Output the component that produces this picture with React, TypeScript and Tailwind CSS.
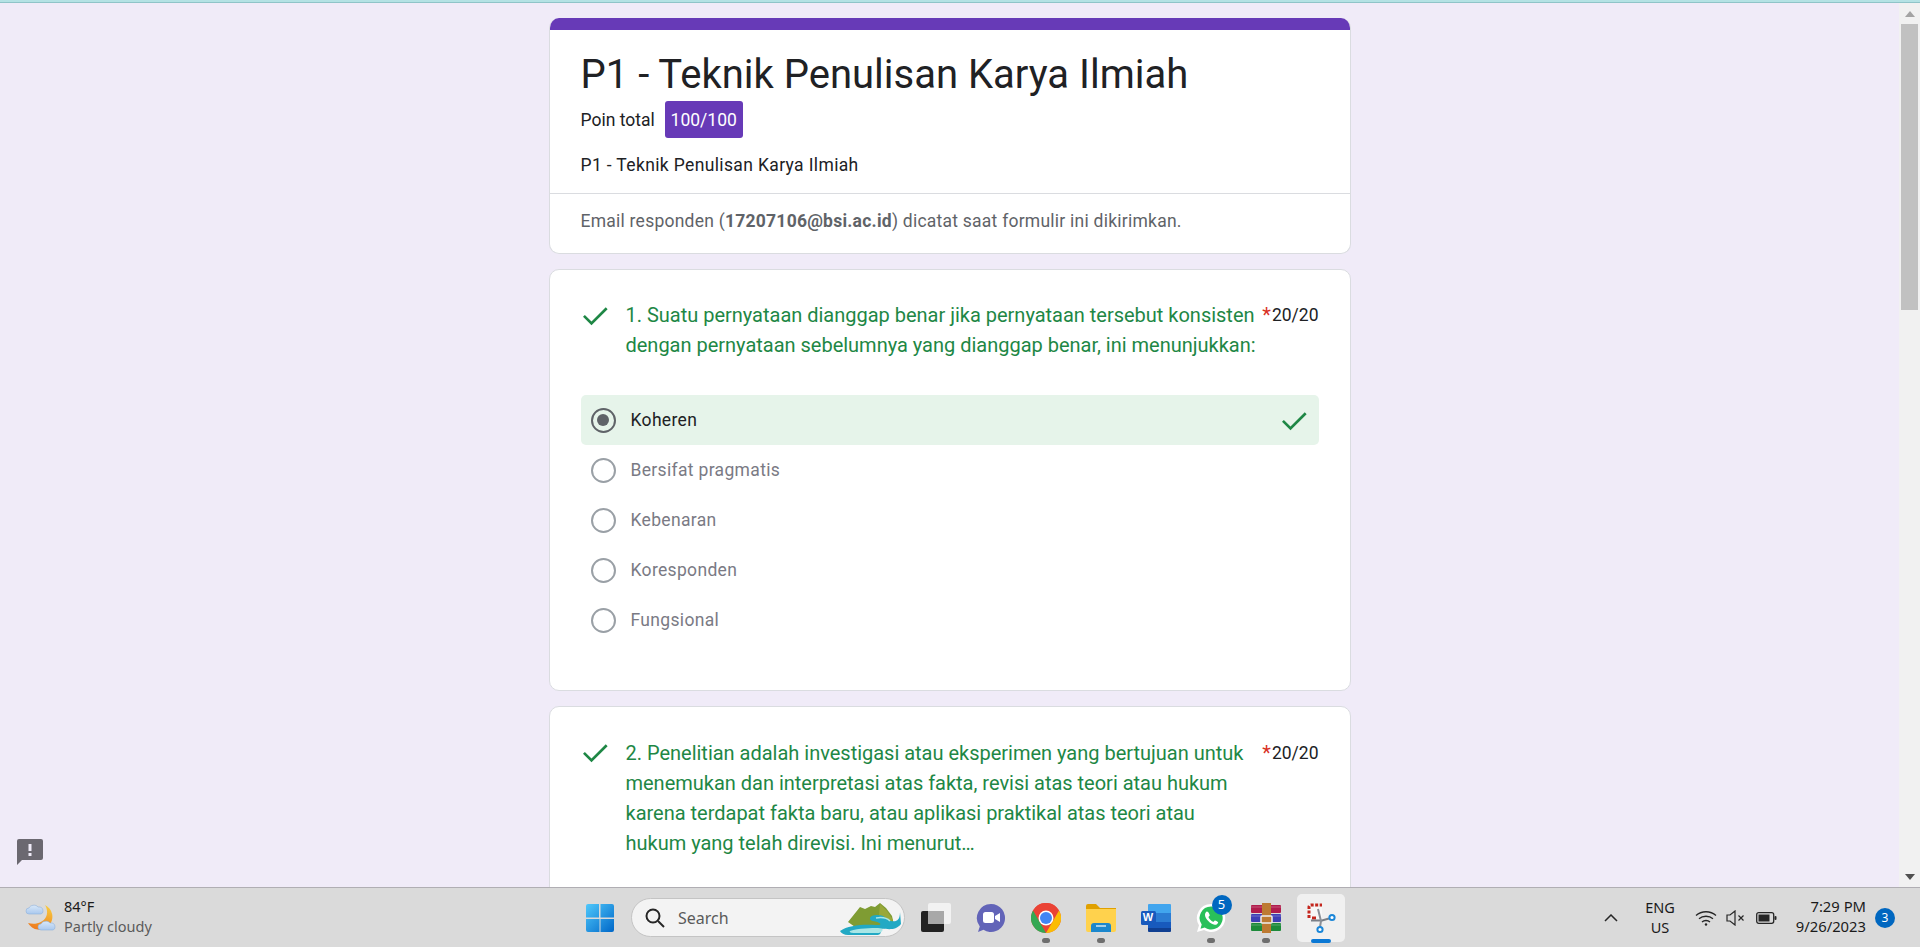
import React from "react";

const Check = ({ className }: { className?: string }) => (
  <svg viewBox="0 0 24 24" className={className} fill="#1e8745">
    <path d="M9.2 17.2 3.9 11.9l-1.5 1.5 6.8 6.8L22.1 7.3l-1.5-1.5z" />
  </svg>
);

function Radio({ on }: { on?: boolean }) {
  return (
    <span className={"flex h-[25px] w-[25px] shrink-0 items-center justify-center rounded-full border-[2.5px] " + (on ? "border-[#5f6368]" : "border-[#9aa0a6]")}>
      {on && <span className="h-[12.5px] w-[12.5px] rounded-full bg-[#5f6368]" />}
    </span>
  );
}

function Option({ label, on }: { label: string; on?: boolean }) {
  return (
    <div className={"flex h-[50px] items-center rounded-[5px] pl-[10px] pr-[10px] " + (on ? "bg-[#e6f4ea]" : "")}>
      <Radio on={on} />
      <span className={"ml-[15px] text-[17.5px] tracking-[0.33px] " + (on ? "text-[#202124]" : "text-[#7a7a84]")}>{label}</span>
      {on && <Check className="ml-auto h-[30px] w-[30px]" />}
    </div>
  );
}

function QuestionHead({ lines }: { lines: string[] }) {
  return (
    <div className="flex items-start">
      <Check className="mt-[-0.5px] ml-[-1px] h-[30px] w-[30px] shrink-0" />
      <div className="ml-[16px] w-[620px] text-[20px] leading-[30px] tracking-[-0.01px] text-[#1e8745]">
        {lines.map((l) => (
          <div key={l} className="whitespace-nowrap">{l}</div>
        ))}
      </div>
      <div className="ml-auto flex text-[17.5px] leading-[30px] text-[#202124]">
        <span className="pr-[1px] text-[20px] text-[#d93025]">*</span>20/20
      </div>
    </div>
  );
}

const WinLogo = () => (
  <svg viewBox="0 0 30 30" className="h-[30px] w-[30px]">
    <defs>
      <linearGradient id="w" x1="0" y1="0" x2="1" y2="1">
        <stop offset="0" stopColor="#4fc8fb" />
        <stop offset="1" stopColor="#0067c8" />
      </linearGradient>
    </defs>
    <path d="M1 3a2 2 0 0 1 2-2h11v13.5H1zM15.5 1H27a2 2 0 0 1 2 2v11.500H15.500zM1 16h13.500v13H3a2 2 0 0 1-2-2zM15.500 16H29v11a2 2 0 0 1-2 2H15.500z" fill="url(#w)" />
  </svg>
);

const Landscape = () => (
  <svg viewBox="0 0 62 36" className="absolute right-[2px] bottom-0 h-[36px] w-[62px]">
    <path d="M8 22 20 7l5 2 6-3 4 1 5-4 6 5 6 8 2 9-16 3-20 1z" fill="#7f9c33" />
    <path d="M40 4l7 7 6 9-3 4-8-1-3-8z" fill="#99a83a" />
    <path d="M0 31c8-6 24-7 36-6 8 .5 4-3-3-4-5-1-4-6 4-6 10 0 8 5 14 6 5 1 9 0 9-9l1 12c-6 8-16 4-20 5-3 1 3 4-3 6H8C4 35 1 33 0 31z" fill="#22a9c4" />
    <path d="M10 31c8-3 22-3 28-3 6 0 6 3 1 5H14c-3 0-5-1-4-2z" fill="#a9e6e6" />
    <path d="M36 18c6-1 11 0 14 3" stroke="#a9e6e6" strokeWidth="1.500" fill="none" />
  </svg>
);

const TaskView = () => (
  <svg viewBox="0 0 30 30" className="h-[30px] w-[30px]">
    <rect x="0" y="8" width="23" height="21" rx="2" fill="#222" />
    <rect x="7" y="0" width="23" height="21" rx="2" fill="#f4f4f4" fillOpacity="0.9" />
    <rect x="7" y="8" width="16" height="13" fill="#a8a8a8" />
  </svg>
);

const Meet = () => (
  <svg viewBox="0 0 30 30" className="h-[30px] w-[30px]">
    <path d="M15 1a14 14 0 1 1-7.500 25.800L2 29l1.800-5.500A14 14 0 0 1 15 1z" fill="#6264b8" />
    <rect x="7" y="9" width="11" height="11" rx="2.500" fill="#fff" />
    <path d="M19 13l5-3v9l-5-3z" fill="#fff" />
  </svg>
);

const Chrome = () => (
  <svg viewBox="0 0 30 30" className="h-[30px] w-[30px]">
    <circle cx="15" cy="15" r="15" fill="#ea4335" />
    <path d="M2 7.500 15 30A15 15 0 0 1 2 7.500z" fill="#34a853" />
    <path d="M15 30 28 7.500A15 15 0 0 1 15 30z" fill="#fbbc04" />
    <path d="M2 7.500A15 15 0 0 1 28 7.500H15A7.500 7.500 0 0 0 8.500 11.300z" fill="#ea4335" />
    <circle cx="15" cy="15" r="7.500" fill="#fff" />
    <circle cx="15" cy="15" r="6" fill="#4285f4" />
  </svg>
);

const Folder = () => (
  <svg viewBox="0 0 30 28" className="h-[28px] w-[30px]">
    <path d="M0 2a2 2 0 0 1 2-2h8l4 4h16v4H0z" fill="#e0a000" />
    <path d="M0 5h30v21a2 2 0 0 1-2 2H2a2 2 0 0 1-2-2z" fill="#ffd24d" />
    <path d="M5 27v-5a3 3 0 0 1 3-3h14a3 3 0 0 1 3 3v6H5z" fill="#1b87cd" />
    <rect x="10" y="21" width="10" height="2" fill="#fff" fillOpacity="0.6" />
  </svg>
);

const WordIcon = () => (
  <div className="relative h-[28px] w-[30px]">
    <svg viewBox="0 0 30 28" className="h-[28px] w-[30px]">
      <path d="M7 1a1 1 0 0 1 1-1h21a1 1 0 0 1 1 1v8H7z" fill="#41a5ee" />
      <rect x="7" y="9" width="23" height="9" fill="#2b7cd3" />
      <rect x="7" y="18" width="23" height="6" fill="#185abd" />
      <path d="M7 24h23v3a1 1 0 0 1-1 1H8a1 1 0 0 1-1-1z" fill="#103f91" />
      <rect x="0" y="7" width="15" height="14" rx="1.500" fill="#185abd" />
    </svg>
    <span className="absolute top-[7px] left-0 flex h-[14px] w-[15px] items-center justify-center font-['Liberation_Sans',sans-serif] text-[11px] font-bold text-white">W</span>
  </div>
);

const WhatsApp = () => (
  <svg viewBox="0 0 30 30" className="h-[30px] w-[30px]">
    <path d="M15 1a14 14 0 1 1-7 26L1 29l2-6.700A14 14 0 0 1 15 1z" fill="#fff" />
    <path d="M15 3.500a11.500 11.500 0 1 1-6.300 21L4.500 25.700l1.200-4.100A11.500 11.500 0 0 1 15 3.500z" fill="#29c05a" />
    <path d="M10.800 8.500c-1 .5-2 2-1.800 3.800.4 3.500 5.300 9 9.700 9.400 1.800.2 3.200-1 3.500-2.300.1-.5-2.800-2.200-3.300-2-.6.300-1 1.300-1.600 1.300-1.500 0-4.800-3.300-4.800-4.700 0-.6 1-1 1.200-1.600.2-.5-1.500-4.300-2.900-3.900z" fill="#fff" />
  </svg>
);

const WinRar = () => (
  <svg viewBox="0 0 30 30" className="h-[30px] w-[30px]">
    <rect x="0" y="2" width="30" height="8" rx="1" fill="#b01c4c" />
    <rect x="0" y="11" width="30" height="8" rx="1" fill="#3f3fb5" />
    <rect x="0" y="20" width="30" height="8" rx="1" fill="#1d8a3a" />
    <path d="M0 4h30M0 13h30M0 22h30" stroke="#fff" strokeOpacity="0.25" strokeWidth="1" />
    <rect x="11" y="0" width="9" height="30" fill="#bd7a32" />
    <rect x="10" y="13" width="11" height="7" rx="1" fill="#bd7a32" stroke="#eee" strokeWidth="1.500" />
  </svg>
);

const Snip = () => (
  <svg viewBox="0 0 30 32" className="h-[32px] w-[30px]">
    <path d="M3 5h13v12H3z" fill="#f7f7f7" />
    <path d="M3 16V5a2 2 0 0 1 2-2h11" stroke="#c4261d" strokeWidth="3" fill="none" strokeDasharray="3 1.500" />
    <path d="M6 16h4" stroke="#c4261d" strokeWidth="3" />
    <path d="M5 18.500h11l7-2" stroke="#7a7f87" strokeWidth="2" fill="none" />
    <path d="M12 7l3 12-1 6" stroke="#8a8f97" strokeWidth="2" fill="none" />
    <circle cx="26" cy="15.500" r="2.600" fill="#fff" stroke="#1a86d8" strokeWidth="2" />
    <circle cx="14" cy="27.500" r="2.600" fill="#fff" stroke="#1a86d8" strokeWidth="2" />
  </svg>
);

const Weather = () => (
  <svg viewBox="0 0 32 32" className="h-[32px] w-[32px]">
    <defs>
      <linearGradient id="moon" x1="0.7" y1="0" x2="0.3" y2="1">
        <stop offset="0" stopColor="#f8c93e" />
        <stop offset="1" stopColor="#ee7a1e" />
      </linearGradient>
      <linearGradient id="cloud" x1="0" y1="0" x2="0" y2="1">
        <stop offset="0" stopColor="#d9e8f8" />
        <stop offset="1" stopColor="#a9c8ee" />
      </linearGradient>
    </defs>
    <path d="M20 3A13 13 0 1 1 3 21C10 23 18 21 21 15 23 11 22 6 20 3z" fill="url(#moon)" />
    <path d="M4 12a3 3 0 0 1 0-6c1-3 7-4 9-1 3-.5 5 1 5 4a3 3 0 0 1-2 3z" fill="url(#cloud)" stroke="#8fb2de" strokeWidth="0.600" />
    <path d="M16 28a3 3 0 0 1 0-6c1-3 7-4 9-1 3-.5 5 1 5 4a3 3 0 0 1-2 3z" fill="url(#cloud)" stroke="#8fb2de" strokeWidth="0.600" />
  </svg>
);

function Cell({ children, dot, active }: { children: React.ReactNode; dot?: boolean; active?: boolean }) {
  return (
    <div className="relative flex h-[48px] w-[55px] items-center justify-center">
      {active && <div className="absolute inset-x-[3.500px] inset-y-0 rounded-[5px] bg-[#f0f0f0]" />}
      <div className="relative flex items-center justify-center">{children}</div>
      {dot && <div className="absolute bottom-[-1px] h-[5px] w-[8px] rounded-full bg-[#6e6e6e]" />}
      {active && <div className="absolute bottom-[-1px] h-[4px] w-[20px] rounded-full bg-[#0b78d4]" />}
    </div>
  );
}

export default function App() {
  return (
    <div className="flex h-[947px] w-[1920px] flex-col overflow-hidden bg-[#f0ebf8] font-['Roboto',sans-serif]">
      <div className="h-[3px] shrink-0 border-b border-[#8fc4c8] bg-[#b4e2e4]" />
      <div className="relative flex min-h-0 flex-1">
        <main className="min-w-0 flex-1 overflow-hidden pt-[15px]">
          <div className="mx-auto w-[802px]">
            <section className="overflow-hidden rounded-[10px] border-x border-b border-[#dadce0] bg-white">
              <div className="-mx-px h-[12px] bg-[#673ab7]" />
              <div className="px-[31px]">
                <h1 className="pt-[22px] text-[40px] leading-[46px] text-[#202124]">P1 - Teknik Penulisan Karya Ilmiah</h1>
                <div className="mt-[3px] flex items-center">
                  <span className="pt-[2px] text-[17.5px] text-[#202124]">Poin total</span>
                  <span className="ml-[10px] flex h-[37px] w-[78px] items-center justify-center rounded-[3px] bg-[#673ab7] pt-[2px] text-[17.5px] text-white">100/100</span>
                </div>
                <p className="mt-[14px] text-[17.5px] leading-[26px] tracking-[0.36px] text-[#202124]">P1 - Teknik Penulisan Karya Ilmiah</p>
              </div>
              <div className="mt-[15px] flex h-[60px] items-start border-t border-[#dadce0] px-[31px] pt-[14px] text-[17.5px] leading-[26px] tracking-[0.24px] text-[#5f6368]">
                <span>Email responden (<b className="font-bold">17207106@bsi.ac.id</b>) dicatat saat formulir ini dikirimkan.</span>
              </div>
            </section>

            <section className="mt-[15px] h-[422px] rounded-[10px] border border-[#dadce0] bg-white pt-[30px] pr-[31px] pl-[31px]">
              <QuestionHead lines={[
                "1. Suatu pernyataan dianggap benar jika pernyataan tersebut konsisten",
                "dengan pernyataan sebelumnya yang dianggap benar, ini menunjukkan:",
              ]} />
              <div className="mt-[35px]">
                <Option label="Koheren" on />
                <Option label="Bersifat pragmatis" />
                <Option label="Kebenaran" />
                <Option label="Koresponden" />
                <Option label="Fungsional" />
              </div>
            </section>

            <section className="mt-[15px] h-[400px] rounded-[10px] border border-[#dadce0] bg-white px-[31px] pt-[30.5px]">
              <QuestionHead lines={[
                "2. Penelitian adalah investigasi atau eksperimen yang bertujuan untuk",
                "menemukan dan interpretasi atas fakta, revisi atas teori atau hukum",
                "karena terdapat fakta baru, atau aplikasi praktikal atas teori atau",
                "hukum yang telah direvisi. Ini menurut…",
              ]} />
            </section>
          </div>
        </main>

        <div className="flex w-[21px] shrink-0 flex-col bg-[#f1f1f1]">
          <div className="flex h-[21px] items-center justify-center">
            <svg viewBox="0 0 10 6" className="h-[6px] w-[10px]"><path d="M5 0l5 6H0z" fill="#a3a3a3" /></svg>
          </div>
          <div className="mx-[2px] h-[286px] bg-[#c1c1c1]" />
          <div className="mt-auto flex h-[21px] items-center justify-center">
            <svg viewBox="0 0 10 6" className="h-[6px] w-[10px]"><path d="M5 6l5-6H0z" fill="#505050" /></svg>
          </div>
        </div>

        <svg viewBox="0 0 26 26" className="absolute bottom-[22px] left-[17px] h-[26px] w-[26px]">
          <path d="M2 0h22a2 2 0 0 1 2 2v17a2 2 0 0 1-2 2H5l-5 5V2a2 2 0 0 1 2-2z" fill="#6b6870" />
          <rect x="11.500" y="5" width="3" height="7" fill="#f0ebf8" />
          <rect x="11.500" y="14" width="3" height="3" fill="#f0ebf8" />
        </svg>
      </div>

      <footer className="flex h-[60px] shrink-0 items-center border-t border-[#b0aeb3] bg-[#dadada] font-['Noto_Sans',sans-serif] text-[#1b1b1b]">
        <div className="flex w-[576px] items-center pl-[25px]">
          <Weather />
          <div className="ml-[7px] mt-[-3px] text-[14.5px] leading-[20px]">
            <div>84°F</div>
            <div className="text-[#5a5a5a]">Partly cloudy</div>
          </div>
        </div>
        <div className="flex w-[47px] items-center justify-center"><WinLogo /></div>
        <div className="relative mr-[3px] ml-[8px] flex h-[39px] w-[274px] items-center overflow-hidden rounded-full border border-[#c4c4c4] bg-[#f3f3f3]">
          <svg viewBox="0 0 20 20" className="ml-[13px] h-[20px] w-[20px]" fill="none" stroke="#262626" strokeWidth="2">
            <circle cx="8" cy="8" r="6.500" />
            <path d="M13 13l6 6" />
          </svg>
          <span className="ml-[13px] text-[16px] text-[#5a5a5a]">Search</span>
          <Landscape />
        </div>
        <Cell><TaskView /></Cell>
        <Cell><Meet /></Cell>
        <Cell dot><Chrome /></Cell>
        <Cell dot><Folder /></Cell>
        <Cell><WordIcon /></Cell>
        <Cell dot>
          <WhatsApp />
          <span className="absolute top-[-8px] left-[16px] flex h-[20px] w-[20px] items-center justify-center rounded-full bg-[#0067c0] text-[13px] text-white">5</span>
        </Cell>
        <Cell dot><WinRar /></Cell>
        <Cell active><Snip /></Cell>

        <div className="ml-auto flex items-center pr-[25px]">
          <svg viewBox="0 0 14 8" className="h-[8px] w-[14px]" fill="none" stroke="#262626" strokeWidth="1.500"><path d="M1 7l6-6 6 6" /></svg>
          <div className="ml-[17px] mt-[-2px] w-[50px] text-center text-[14.5px] leading-[20px]">
            <div>ENG</div>
            <div>US</div>
          </div>
          <svg viewBox="0 0 22 16" className="ml-[10px] h-[16px] w-[22px]" fill="none" stroke="#262626" strokeWidth="1.300">
            <path d="M1 5.500c5.500-5 14.500-5 20 0M4 8.800c3.800-3.400 10.200-3.400 14 0M7 12c2.200-2 5.800-2 8 0" />
            <circle cx="11" cy="14.500" r="1.200" fill="#262626" stroke="none" />
          </svg>
          <svg viewBox="0 0 20 16" className="ml-[9px] h-[16px] w-[20px]" fill="none" stroke="#262626" strokeWidth="1.200">
            <path d="M1 5v6h3l5 4V1L4 5z" />
            <path d="M12.500 5.500l5 5M17.500 5.500l-5 5" />
          </svg>
          <svg viewBox="0 0 21 12" className="ml-[10px] h-[12px] w-[21px]">
            <rect x="0.700" y="0.700" width="17" height="10.600" rx="2" fill="none" stroke="#262626" strokeWidth="1.300" />
            <rect x="2.500" y="2.500" width="11" height="7" fill="#262626" />
            <rect x="18.500" y="4" width="2" height="4" rx="1" fill="#262626" />
          </svg>
          <div className="ml-[9px] mt-[-4px] w-[80px] text-right text-[14.8px] leading-[20px] whitespace-nowrap">
            <div>7:29 PM</div>
            <div>9/26/2023</div>
          </div>
          <span className="ml-[9px] flex h-[20px] w-[20px] items-center justify-center rounded-full bg-[#0067c0] text-[12px] text-white">3</span>
        </div>
      </footer>
    </div>
  );
}
